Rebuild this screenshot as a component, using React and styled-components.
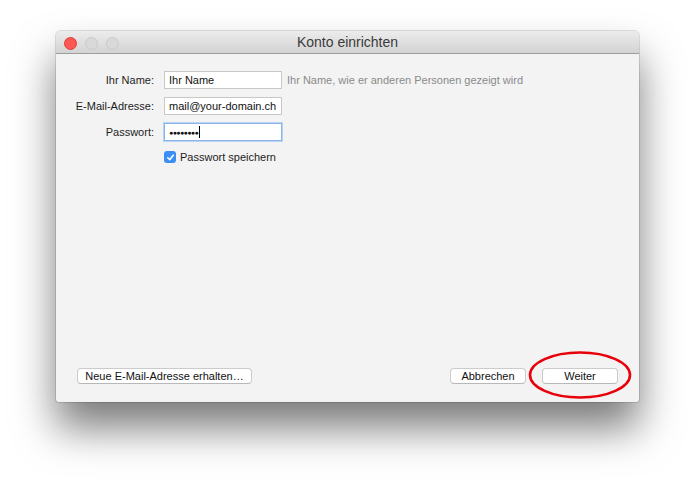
import React from "react";
import styled, { createGlobalStyle } from "styled-components";

const GlobalStyle = createGlobalStyle`
  html, body {
    margin: 0;
    background: #fff;
    font-family: "Liberation Sans", Arial, sans-serif;
  }
`;

const Page = styled.div`
  width: 695px;
  height: 482px;
  padding: 31px 0 0 56px;
  box-sizing: border-box;
  overflow: hidden;
`;

const Window = styled.div`
  position: relative;
  width: 583px;
  height: 371px;
  display: flex;
  flex-direction: column;
  background: #f3f3f3;
  border-radius: 5px 5px 3px 3px;
  box-shadow: 0 26px 42px rgba(0, 0, 0, 0.52), 0 0 0 1px rgba(0, 0, 0, 0.12);
`;

const TitleBar = styled.div`
  position: relative;
  height: 22px;
  flex: none;
  display: flex;
  align-items: center;
  justify-content: center;
  background: linear-gradient(#ececec, #d3d3d3);
  border-bottom: 1px solid #9e9e9e;
  border-radius: 5px 5px 0 0;
`;

const Lights = styled.div`
  position: absolute;
  left: 8px;
  top: 6px;
  display: flex;
  gap: 8px;
`;

const Light = styled.span`
  width: 11px;
  height: 11px;
  border-radius: 50%;
  background: ${(p) => (p.$red ? "#fc5753" : "#d9d9d9")};
  border: 1px solid ${(p) => (p.$red ? "#df3e3a" : "#c9c9c9")};
`;

const Title = styled.div`
  font-size: 14px;
  color: #3a3a3a;
`;

const Body = styled.div`
  flex: 1;
  display: flex;
  flex-direction: column;
  justify-content: space-between;
  padding: 17px 21px 18px 15px;
`;

const Form = styled.div`
  display: grid;
  grid-template-columns: 83px 118px auto;
  column-gap: 10px;
  row-gap: 8px;
  align-items: center;
`;

const Label = styled.div`
  font-size: 11px;
  color: #1d1d1d;
  text-align: right;
  white-space: nowrap;
`;

const Input = styled.div`
  height: 18px;
  box-sizing: border-box;
  background: #fff;
  border: 1px solid ${(p) => (p.$focus ? "#8ab4ea" : "#c8c8c8")};
  box-shadow: ${(p) => (p.$focus ? "0 0 0 1px #b6d2f4" : "none")};
  padding: 0 4px;
  display: flex;
  align-items: center;
  font-size: 11px;
  color: #111;
  white-space: nowrap;
`;

const Dots = styled.span`
  font-size: 7px;
  letter-spacing: -0.6px;
`;

const Caret = styled.span`
  width: 1px;
  height: 12px;
  margin-left: 1px;
  background: #000;
`;

const Hint = styled.div`
  font-size: 11px;
  color: #8a8a8a;
  margin-left: -5px;
  white-space: nowrap;
`;

const CheckRow = styled.label`
  grid-column: 2 / 4;
  display: flex;
  align-items: center;
  gap: 4px;
  margin-top: 2px;
  font-size: 11px;
  color: #1d1d1d;
`;

const Box = styled.span`
  width: 12px;
  height: 12px;
  border-radius: 3px;
  background: #3a8ef6;
  display: flex;
  align-items: center;
  justify-content: center;
`;

const Footer = styled.div`
  display: flex;
  align-items: center;
  gap: 16px;
  padding-left: 6px;
`;

const Button = styled.button`
  height: 16px;
  width: ${(p) => p.$w}px;
  margin-right: ${(p) => (p.$push ? "auto" : "0")};
  padding: 0;
  box-sizing: border-box;
  background: #fff;
  border: 1px solid #cbcbcb;
  border-bottom-color: #b8b8b8;
  border-radius: 4px;
  font-family: inherit;
  font-size: 11px;
  color: #111;
  line-height: 14px;
`;

const Ring = styled.svg`
  position: absolute;
  left: 472px;
  top: 320px;
  overflow: visible;
`;

export default function App() {
  return (
    <>
      <GlobalStyle />
      <Page>
        <Window>
          <TitleBar>
            <Lights>
              <Light $red />
              <Light />
              <Light />
            </Lights>
            <Title>Konto einrichten</Title>
          </TitleBar>
          <Body>
            <Form>
              <Label>Ihr Name:</Label>
              <Input>Ihr Name</Input>
              <Hint>Ihr Name, wie er anderen Personen gezeigt wird</Hint>
              <Label>E-Mail-Adresse:</Label>
              <Input>mail@your-domain.ch</Input>
              <div />
              <Label>Passwort:</Label>
              <Input $focus>
                <Dots>●●●●●●●●</Dots>
                <Caret />
              </Input>
              <div />
              <div />
              <CheckRow>
                <Box>
                  <svg width="9" height="9" viewBox="0 0 10 10">
                    <path d="M2 5.3 L4.2 7.5 L8 2.5" fill="none" stroke="#fff" strokeWidth="1.8" strokeLinecap="round" strokeLinejoin="round" />
                  </svg>
                </Box>
                Passwort speichern
              </CheckRow>
            </Form>
            <Footer>
              <Button $w={175} $push>Neue E-Mail-Adresse erhalten…</Button>
              <Button $w={76}>Abbrechen</Button>
              <Button $w={76}>Weiter</Button>
            </Footer>
          </Body>
          <Ring width="104" height="48">
            <ellipse cx="52" cy="24" rx="50" ry="22.5" fill="none" stroke="#e8000b" strokeWidth="2.6" />
          </Ring>
        </Window>
      </Page>
    </>
  );
}
